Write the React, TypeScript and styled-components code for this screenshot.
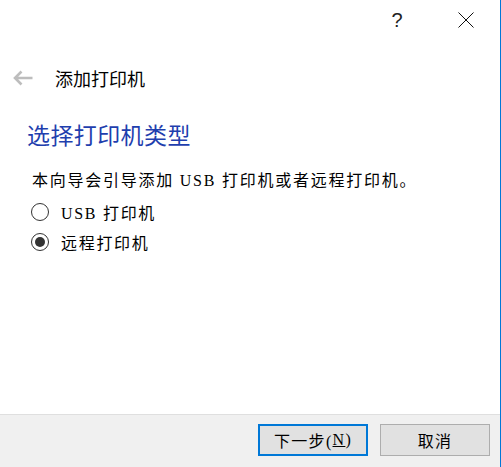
import React from "react";
import styled, { createGlobalStyle } from "styled-components";

const Global = createGlobalStyle`
  html, body { margin: 0; padding: 0; background: #ffffff; }
  * { box-sizing: border-box; }
`;

const SERIF = `"Liberation Serif", "Noto Sans CJK SC", serif`;
const SANS = `"Noto Sans CJK SC", "Noto Sans", sans-serif`;

const Window = styled.div`
  width: 501px;
  height: 467px;
  background: #ffffff;
  border-right: 1px solid #0078d7;
  display: flex;
  flex-direction: column;
  overflow: hidden;
`;

const TitleBar = styled.div`
  height: 40px;
  display: flex;
  justify-content: flex-end;
  align-items: center;
  gap: 23px;
  padding-right: 11px;
`;

const CaptionButton = styled.div`
  width: 46px;
  height: 40px;
  display: flex;
  align-items: center;
  justify-content: center;
  color: #222;
  font-family: "Liberation Sans", "Noto Sans", sans-serif;
  font-size: 20px;
`;

const HeaderRow = styled.div`
  margin-top: 20px;
  height: 36px;
  display: flex;
  align-items: center;
  padding-left: 13px;
`;

const BackArrow = styled.div`
  width: 20px;
  height: 16px;
  display: flex;
  align-items: center;
  margin-right: 22px;
`;

const Title = styled.div`
  font-family: ${SANS};
  font-size: 18px;
  color: #000;
  line-height: 36px;
`;

const Content = styled.div`
  padding-left: 27px;
  display: flex;
  flex-direction: column;
`;

const Heading = styled.div`
  margin-top: 22px;
  font-family: ${SANS};
  font-size: 23px;
  letter-spacing: 0.4px;
  line-height: 32px;
  color: #1f3fae;
`;

const Body = styled.div`
  margin-top: 19px;
  padding-left: 5px;
  font-family: ${SERIF};
  font-size: 16px;
  letter-spacing: 1.75px;
  line-height: 24px;
  color: #000;
`;

const RadioList = styled.div`
  margin-top: 4px;
  padding-left: 4px;
  display: flex;
  flex-direction: column;
`;

const RadioRow = styled.div`
  height: 30px;
  display: flex;
  align-items: center;
  gap: 12px;
`;

const RadioCircle = styled.div<{ $checked?: boolean }>`
  width: 18px;
  height: 18px;
  border-radius: 50%;
  border: 1.3px solid #333;
  background: #fff;
  display: flex;
  align-items: center;
  justify-content: center;
  &::after {
    content: "";
    width: 10px;
    height: 10px;
    border-radius: 50%;
    background: #333;
    display: ${(p) => (p.$checked ? "block" : "none")};
  }
`;

const RadioLabel = styled.span`
  font-family: ${SERIF};
  font-size: 16px;
  letter-spacing: 1.7px;
  color: #000;
`;

const Footer = styled.div`
  margin-top: auto;
  height: 53px;
  background: #f0f0f0;
  border-top: 1px solid #dfdfdf;
  display: flex;
  justify-content: flex-end;
  align-items: flex-start;
  gap: 12px;
  padding: 9px 10px 0 0;
`;

const Button = styled.div<{ $primary?: boolean }>`
  width: 110px;
  height: 32px;
  background: #e1e1e1;
  border: ${(p) => (p.$primary ? "2px solid #0078d7" : "1px solid #adadad")};
  display: flex;
  align-items: center;
  justify-content: center;
  font-family: ${SERIF};
  font-size: 16px;
  letter-spacing: 1.3px;
  color: #000;
`;

const Mnemonic = styled.span`
  text-decoration: underline;
`;

export default function App() {
  return (
    <>
      <Global />
      <Window>
        <TitleBar>
          <CaptionButton>?</CaptionButton>
          <CaptionButton>
            <svg width="16" height="16" viewBox="0 0 16 16">
              <path d="M0.5 0.5 L15.5 15.5 M15.5 0.5 L0.5 15.5" stroke="#111" strokeWidth="1" fill="none" />
            </svg>
          </CaptionButton>
        </TitleBar>
        <HeaderRow>
          <BackArrow>
            <svg width="20" height="16" viewBox="0 0 20 16">
              <path d="M19.5 8 L2 8 M8.5 1.5 L2 8 L8.5 14.5" stroke="#bdbdbd" strokeWidth="2.6" fill="none" />
            </svg>
          </BackArrow>
          <Title>添加打印机</Title>
        </HeaderRow>
        <Content>
          <Heading>选择打印机类型</Heading>
          <Body>本向导会引导添加 USB 打印机或者远程打印机。</Body>
          <RadioList>
            <RadioRow>
              <RadioCircle />
              <RadioLabel>USB 打印机</RadioLabel>
            </RadioRow>
            <RadioRow>
              <RadioCircle $checked />
              <RadioLabel>远程打印机</RadioLabel>
            </RadioRow>
          </RadioList>
        </Content>
        <Footer>
          <Button $primary>
            下一步(<Mnemonic>N</Mnemonic>)
          </Button>
          <Button>取消</Button>
        </Footer>
      </Window>
    </>
  );
}
